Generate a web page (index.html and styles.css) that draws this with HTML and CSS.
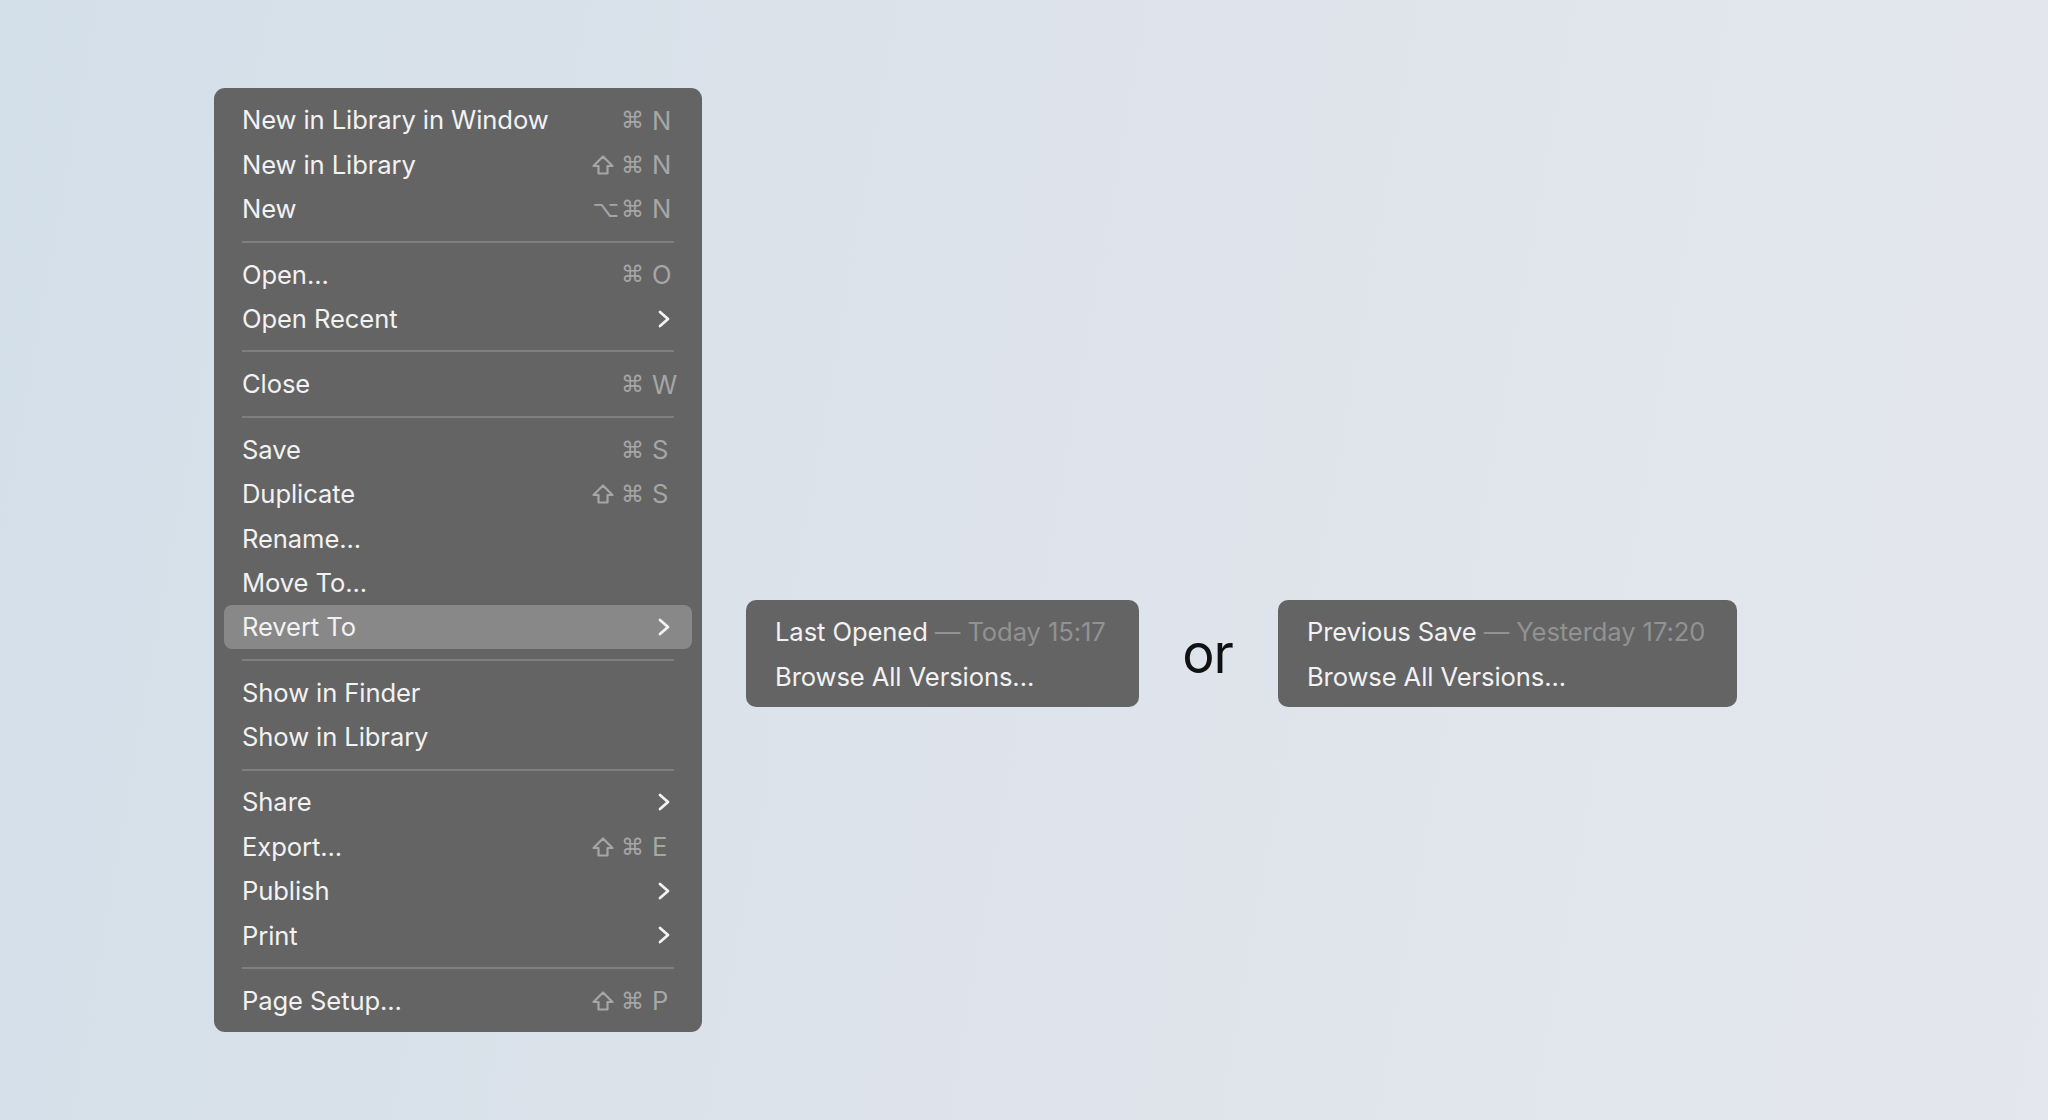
FILE: index.html
```html
<!DOCTYPE html>
<html lang="en">
<head>
<meta charset="utf-8">
<title>File menu — Revert To</title>
<link rel="stylesheet" href="styles.css">
</head>
<body>
<main class="stage">
  <div class="menu">
    <div class="item"><span class="label">New in Library in Window</span><span class="keys"><span class="mod">⌘</span><span class="key">N</span></span></div>
    <div class="item"><span class="label">New in Library</span><span class="keys"><svg class="shift" viewBox="0 0 22 20"><path d="M11 1.5 L20.5 11 H15.5 V18.5 H6.5 V11 H1.5 Z"/></svg><span class="mod">⌘</span><span class="key">N</span></span></div>
    <div class="item"><span class="label">New</span><span class="keys"><span class="mod">⌥⌘</span><span class="key">N</span></span></div>
    <div class="sep"></div>
    <div class="item"><span class="label">Open...</span><span class="keys"><span class="mod">⌘</span><span class="key">O</span></span></div>
    <div class="item"><span class="label">Open Recent</span><svg class="chev" viewBox="0 0 12 18"><path d="M2 2 L10 9 L2 16"/></svg></div>
    <div class="sep"></div>
    <div class="item"><span class="label">Close</span><span class="keys"><span class="mod">⌘</span><span class="key">W</span></span></div>
    <div class="sep"></div>
    <div class="item"><span class="label">Save</span><span class="keys"><span class="mod">⌘</span><span class="key">S</span></span></div>
    <div class="item"><span class="label">Duplicate</span><span class="keys"><svg class="shift" viewBox="0 0 22 20"><path d="M11 1.5 L20.5 11 H15.5 V18.5 H6.5 V11 H1.5 Z"/></svg><span class="mod">⌘</span><span class="key">S</span></span></div>
    <div class="item"><span class="label">Rename...</span></div>
    <div class="item"><span class="label">Move To...</span></div>
    <div class="item active"><span class="label">Revert To</span><svg class="chev" viewBox="0 0 12 18"><path d="M2 2 L10 9 L2 16"/></svg></div>
    <div class="sep"></div>
    <div class="item"><span class="label">Show in Finder</span></div>
    <div class="item"><span class="label">Show in Library</span></div>
    <div class="sep"></div>
    <div class="item"><span class="label">Share</span><svg class="chev" viewBox="0 0 12 18"><path d="M2 2 L10 9 L2 16"/></svg></div>
    <div class="item"><span class="label">Export...</span><span class="keys"><svg class="shift" viewBox="0 0 22 20"><path d="M11 1.5 L20.5 11 H15.5 V18.5 H6.5 V11 H1.5 Z"/></svg><span class="mod">⌘</span><span class="key">E</span></span></div>
    <div class="item"><span class="label">Publish</span><svg class="chev" viewBox="0 0 12 18"><path d="M2 2 L10 9 L2 16"/></svg></div>
    <div class="item"><span class="label">Print</span><svg class="chev" viewBox="0 0 12 18"><path d="M2 2 L10 9 L2 16"/></svg></div>
    <div class="sep"></div>
    <div class="item"><span class="label">Page Setup...</span><span class="keys"><svg class="shift" viewBox="0 0 22 20"><path d="M11 1.5 L20.5 11 H15.5 V18.5 H6.5 V11 H1.5 Z"/></svg><span class="mod">⌘</span><span class="key">P</span></span></div>
  </div>

  <div class="versions">
    <div class="submenu first">
      <div class="item"><span class="label">Last Opened <span class="dim">— Today 15:17</span></span></div>
      <div class="item"><span class="label">Browse All Versions...</span></div>
    </div>
    <span class="or">or</span>
    <div class="submenu second">
      <div class="item"><span class="label">Previous Save <span class="dim">— Yesterday 17:20</span></span></div>
      <div class="item"><span class="label">Browse All Versions...</span></div>
    </div>
  </div>
</main>
</body>
</html>
```
FILE: styles.css
```css
html, body {
  margin: 0;
  padding: 0;
  height: 100%;
}

body {
  background: linear-gradient(100deg, #d3dfe9 0%, #dde3eb 45%, #e4e7ed 100%);
  font-family: Inter, "Noto Sans", "Liberation Sans", sans-serif;
  color: #f2f2f2;
  overflow: hidden;
}

.stage {
  display: flex;
  align-items: flex-start;
  padding: 88px 0 0 214px;
}

.menu {
  width: 488px;
  box-sizing: border-box;
  background: #646464;
  border-radius: 11px;
  padding: 10px 10px 9px;
  display: flex;
  flex-direction: column;
}

.item {
  height: 44.4px;
  display: flex;
  align-items: center;
  justify-content: space-between;
  padding: 0 22px 0 18px;
  border-radius: 8px;
  font-size: 25.6px;
  letter-spacing: -0.1px;
  white-space: nowrap;
}

.item.active {
  background: #888888;
}

.label {
  line-height: 1;
}

.sep {
  height: 2px;
  background: #7f7f7f;
  margin: 9.5px 18px;
}

.keys {
  display: flex;
  align-items: center;
  gap: 7px;
  color: #a6a6a6;
}

.mod {
  font-family: "DejaVu Sans", sans-serif;
  font-size: 23px;
  letter-spacing: 2px;
  margin-right: -2px;
}

.shift {
  width: 22px;
  height: 20px;
  fill: none;
  stroke: #a6a6a6;
  stroke-width: 2.2;
  stroke-linejoin: round;
}

.key {
  width: 18px;
  margin-left: 1px;
  font-size: 25.6px;
}

.chev {
  width: 12px;
  height: 18px;
  fill: none;
  stroke: #f2f2f2;
  stroke-width: 2.8;
  stroke-linecap: round;
  stroke-linejoin: round;
}

.versions {
  display: flex;
  align-items: center;
  margin: 512px 0 0 44px;
}

.submenu {
  background: #646464;
  border-radius: 10px;
  padding: 10px 0 8.5px;
  display: flex;
  flex-direction: column;
}

.submenu .item {
  padding: 0 33.5px 0 29px;
}

.submenu.second .item {
  padding: 0 32px 0 29px;
}

.dim {
  color: #929292;
}

.or {
  font-size: 54px;
  letter-spacing: -1px;
  color: #111111;
  margin: 1px 45px 0 43px;
  line-height: 1;
}
```
